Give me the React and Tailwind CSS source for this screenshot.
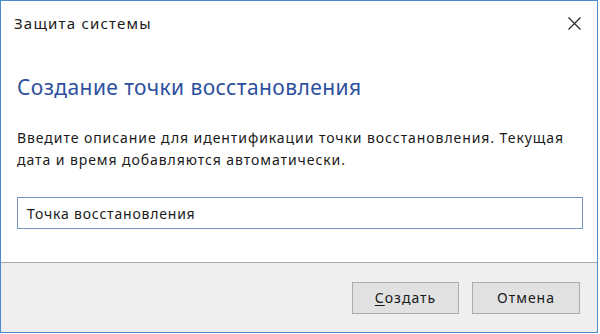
export default function App() {
  return (
    <div className="h-[334px] w-[600px] bg-white font-['Noto_Sans',sans-serif] text-[#1a1a1a]">
      <div className="flex h-[333px] w-[598px] flex-col border border-[#4a8ad0] bg-white">
        <div className="flex h-[45px] items-center justify-between pl-[13px] pr-[16px]">
          <span className="text-[15px] tracking-[1.2px]">Защита системы</span>
          <svg width="13" height="13" viewBox="0 0 13 13" className="text-[#2a2a2a]">
            <path d="M0.5 0.5 L12.5 12.5 M12.5 0.5 L0.5 12.5" stroke="currentColor" strokeWidth="1.2" />
          </svg>
        </div>
        <div className="flex-1 px-[16px]">
          <h1 className="mt-[27px] text-[21px] leading-[28px] tracking-[0.4px] text-[#2d4f9e]">
            Создание точки восстановления
          </h1>
          <p className="mt-[26px] text-[14px] leading-[22px] tracking-[0.93px]">
            Введите описание для идентификации точки восстановления. Текущая
            <br />
            дата и время добавляются автоматически.
          </p>
          <div className="mt-[26px] flex h-[32px] w-[566px] items-center border border-[#7496c4] px-[9px] text-[14px] tracking-[0.8px]">
            Точка восстановления
          </div>
        </div>
        <div className="flex h-[70px] items-center justify-end gap-[13px] border-t border-[#a9a9a9] bg-[#efefef] pr-[17px]">
          <button className="h-[32px] w-[107px] border border-[#adadad] bg-[#e1e1e1] text-[14px] tracking-[1px]">
            <span className="underline underline-offset-2">С</span>оздать
          </button>
          <button className="h-[32px] w-[108px] border border-[#adadad] bg-[#e1e1e1] text-[14px] tracking-[1px]">
            Отмена
          </button>
        </div>
      </div>
    </div>
  )
}
